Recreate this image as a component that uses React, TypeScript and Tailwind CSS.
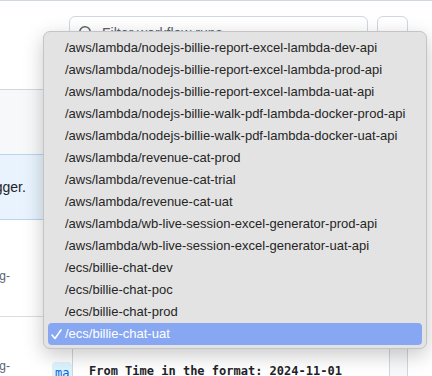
import React from "react";

const items = [
  "/aws/lambda/nodejs-billie-report-excel-lambda-dev-api",
  "/aws/lambda/nodejs-billie-report-excel-lambda-prod-api",
  "/aws/lambda/nodejs-billie-report-excel-lambda-uat-api",
  "/aws/lambda/nodejs-billie-walk-pdf-lambda-docker-prod-api",
  "/aws/lambda/nodejs-billie-walk-pdf-lambda-docker-uat-api",
  "/aws/lambda/revenue-cat-prod",
  "/aws/lambda/revenue-cat-trial",
  "/aws/lambda/revenue-cat-uat",
  "/aws/lambda/wb-live-session-excel-generator-prod-api",
  "/aws/lambda/wb-live-session-excel-generator-uat-api",
  "/ecs/billie-chat-dev",
  "/ecs/billie-chat-poc",
  "/ecs/billie-chat-prod",
  "/ecs/billie-chat-uat",
];

export default function App() {
  return (
    <div
      className="relative w-[432px] h-[376px] overflow-hidden bg-white text-[#1f2328]"
      style={{ fontFamily: "'Liberation Sans', Arial, sans-serif" }}
    >
      {/* background page */}
      <div className="flex flex-col h-full border-t border-[#d0d7de]">
        <div className="flex h-[16px]" />
        <div className="flex gap-[9px] pl-[69px]">
          <div className="flex items-center w-[299px] h-[32px] rounded-[6px] border border-[#d0d7de] bg-white pl-[8px] gap-[8px]">
            <svg width="16" height="16" viewBox="0 0 16 16" fill="#59636e" className="mt-[3px]">
              <path d="M10.68 11.74a6 6 0 0 1-7.922-8.982 6 6 0 0 1 8.982 7.922l3.04 3.04a.749.749 0 0 1-.326 1.275.749.749 0 0 1-.734-.215ZM11.5 7a4.499 4.499 0 1 0-8.997 0A4.499 4.499 0 0 0 11.5 7Z" />
            </svg>
            <span className="text-[14px] text-[#59636e] mt-[3px]">Filter workflow runs</span>
          </div>
          <div className="flex items-center justify-center w-[31px] h-[32px] rounded-[6px] border border-[#d0d7de] bg-white text-[#59636e] text-[14px]">
            ···
          </div>
        </div>
        <div className="h-[45px]" />
        <div className="flex">
          <div className="w-[60px] flex flex-col">
            <div className="h-[65px] border-t border-[#d0d7de] bg-[#f6f8fa]" />
            <div className="h-[66px] border-y border-[#b6d5f2] bg-[#e8f3fd] flex items-center overflow-hidden">
              <span className="text-[14px] -ml-[17px] whitespace-nowrap">trigger.</span>
            </div>
            <div className="h-[96px] flex flex-col overflow-hidden">
              <span className="text-[12px] text-[#59636e] mt-[47px] -ml-[10px] whitespace-nowrap">ing-</span>
            </div>
            <div className="border-t border-[#d8dee4] h-[60px] overflow-hidden">
              <span className="block text-[12px] text-[#59636e] mt-[40px] -ml-[10px] whitespace-nowrap">ing-</span>
            </div>
          </div>
        </div>
      </div>

      {/* code block bottom */}
      <div className="absolute left-[52px] top-[300px] flex">
        <div className="w-[20px] pt-[62px]">
          <span
            className="block rounded-[4px] bg-[#ddf4ff] text-[#0969da] text-[12px] pl-[3px] h-[20px] leading-[22px]"
            style={{ fontFamily: "'DejaVu Sans Mono', monospace" }}
          >
            ma
          </span>
        </div>
        <div className="w-[318px] h-[80px] border-l border-r border-[#d0d7de] bg-white pl-[16px] pt-[58px]">
          <span
            className="text-[12px] font-bold text-[#1f2328] whitespace-nowrap"
            style={{ fontFamily: "'DejaVu Sans Mono', monospace" }}
          >
            From Time in the format: 2024-11-01
          </span>
        </div>
        <div className="w-[18px] h-[80px] border-r border-[#d0d7de] bg-[#f6f8fa]" />
      </div>

      {/* popup menu */}
      <div className="absolute left-[43px] top-[31px] w-[384px] rounded-[7px] bg-[#e3e3e3] border border-[#c4c4c4] shadow-[0_6px_20px_rgba(0,0,0,0.22)] px-[4px] pt-[5px] pb-[3px]">
        {items.map((t, i) => {
          const sel = i === items.length - 1;
          return (
            <div
              key={t}
              className={
                "relative flex items-center h-[22px] rounded-[4px] pl-[17px] text-[13px] whitespace-nowrap " +
                (sel ? "bg-[#87a7f2] text-white" : "text-[#262626]")
              }
            >
              {sel && (
                <svg
                  className="absolute left-[3px] top-[6px]"
                  width="11"
                  height="11"
                  viewBox="0 0 11 11"
                  fill="none"
                  stroke="white"
                  strokeWidth="1.6"
                  strokeLinecap="round"
                  strokeLinejoin="round"
                >
                  <path d="M1 6 L4 9.5 L10 1" />
                </svg>
              )}
              {t}
            </div>
          );
        })}
      </div>
    </div>
  );
}
